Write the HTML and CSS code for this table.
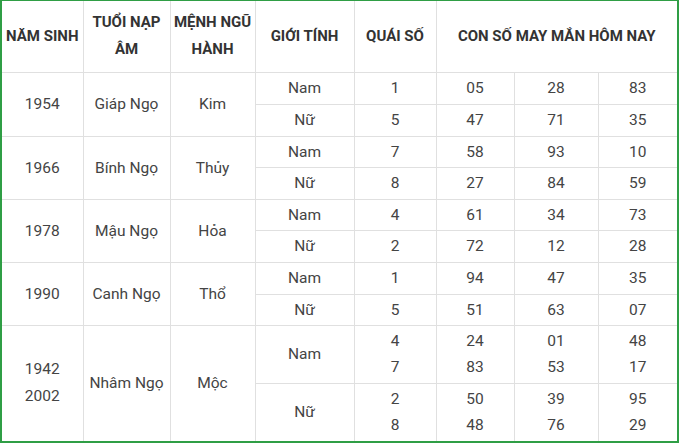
FILE: index.html
```html
<!DOCTYPE html>
<html lang="vi">
<head>
<meta charset="utf-8">
<link rel="stylesheet" href="styles.css">
</head>
<body>
<div class="frame">
<table class="lucky">
<colgroup>
<col class="c1"><col class="c2"><col class="c3"><col class="c4"><col class="c5"><col class="c6"><col class="c7"><col class="c8">
</colgroup>
<thead>
<tr class="head">
<th>NĂM SINH</th>
<th>TUỔI NẠP ÂM</th>
<th>MỆNH NGŨ HÀNH</th>
<th>GIỚI TÍNH</th>
<th>QUÁI SỐ</th>
<th colspan="3">CON SỐ MAY MẮN HÔM NAY</th>
</tr>
</thead>
<tbody>
<tr class="r32"><td rowspan="2">1954</td><td rowspan="2">Giáp Ngọ</td><td rowspan="2">Kim</td><td>Nam</td><td>1</td><td>05</td><td>28</td><td>83</td></tr>
<tr class="r32"><td>Nữ</td><td>5</td><td>47</td><td>71</td><td>35</td></tr>
<tr class="r31"><td rowspan="2">1966</td><td rowspan="2">Bính Ngọ</td><td rowspan="2">Thủy</td><td>Nam</td><td>7</td><td>58</td><td>93</td><td>10</td></tr>
<tr class="r32"><td>Nữ</td><td>8</td><td>27</td><td>84</td><td>59</td></tr>
<tr class="r31"><td rowspan="2">1978</td><td rowspan="2">Mậu Ngọ</td><td rowspan="2">Hỏa</td><td>Nam</td><td>4</td><td>61</td><td>34</td><td>73</td></tr>
<tr class="r32"><td>Nữ</td><td>2</td><td>72</td><td>12</td><td>28</td></tr>
<tr class="r32"><td rowspan="2">1990</td><td rowspan="2">Canh Ngọ</td><td rowspan="2">Thổ</td><td>Nam</td><td>1</td><td>94</td><td>47</td><td>35</td></tr>
<tr class="r31"><td>Nữ</td><td>5</td><td>51</td><td>63</td><td>07</td></tr>
<tr class="r58"><td rowspan="2" class="two">1942<br>2002</td><td rowspan="2">Nhâm Ngọ</td><td rowspan="2">Mộc</td><td>Nam</td><td>4<br>7</td><td>24<br>83</td><td>01<br>53</td><td>48<br>17</td></tr>
<tr class="r58"><td>Nữ</td><td>2<br>8</td><td>50<br>48</td><td>39<br>76</td><td>95<br>29</td></tr>
</tbody>
</table>
</div>
</body>
</html>
```
FILE: styles.css
```css
html, body {
  margin: 0;
  padding: 0;
  background: #ffffff;
}
body {
  width: 680px;
  height: 444px;
  overflow: hidden;
  font-family: Roboto, "Liberation Sans", Arial, sans-serif;
}
.frame {
  width: 679px;
  height: 443px;
  box-sizing: border-box;
  border-top: 1px solid #2f9e45;
  border-left: 2px solid #2f9e45;
  border-right: 2px solid #2f9e45;
  border-bottom: 2px solid #2f9e45;
  background: #fff;
}
.lucky {
  width: 675px;
  border-collapse: collapse;
  table-layout: fixed;
  border-style: hidden;
}
.c1 { width: 81px; }
.c2 { width: 87px; }
.c3 { width: 85px; }
.c4 { width: 99px; }
.c5 { width: 82px; }
.c6 { width: 78px; }
.c7 { width: 84px; }
.c8 { width: 79px; }
.lucky th,
.lucky td {
  border: 1px solid #e0e0e0;
  padding: 0 2px;
  text-align: center;
  vertical-align: middle;
}
.lucky th {
  font-size: 15px;
  font-weight: 700;
  color: #333;
  line-height: 27px;
}
.lucky td {
  font-size: 15.5px;
  font-weight: 400;
  color: #444;
  line-height: 26px;
}
.lucky td.two {
  line-height: 27px;
}
.head { height: 71px; }
.r31 { height: 31px; }
.r32 { height: 32px; }
.r58 { height: 58px; }
```
